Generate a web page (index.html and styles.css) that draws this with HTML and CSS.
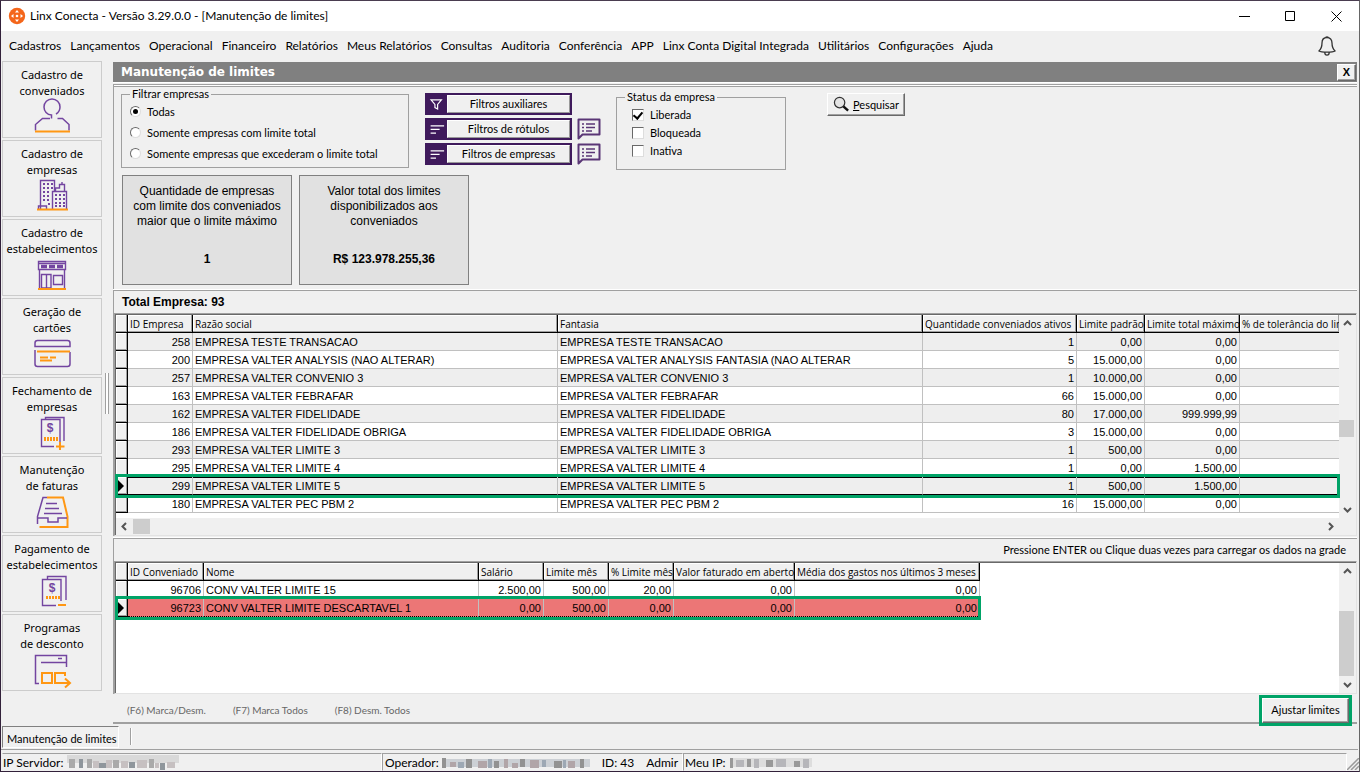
FILE: index.html
```html
<!DOCTYPE html>
<html lang="pt-BR">
<head>
<meta charset="utf-8">
<title>Linx Conecta - Manutenção de limites</title>
<link rel="stylesheet" href="styles.css">
</head>
<body>
<header class="titlebar">
  <svg class="app-logo" viewBox="0 0 18 18"><circle cx="9" cy="9" r="8.2" fill="#f4661b"/><g fill="#fff"><path d="M9 3l2 2.5H7zM9 15l2-2.5H7zM3 9l2.500-2v4zM15 9l-2.500-2v4z"/><circle cx="9" cy="9" r="1.300"/></g></svg>
  <h1 class="app-title">Linx Conecta - Versão 3.29.0.0 - [Manutenção de limites]</h1>
  <div class="window-controls">
    <button aria-label="Minimizar"><svg viewBox="0 0 11 11"><path d="M0 5.500h11"/></svg></button>
    <button aria-label="Maximizar"><svg viewBox="0 0 11 11"><path d="M.5.5h9v9h-9z"/></svg></button>
    <button aria-label="Fechar"><svg viewBox="0 0 11 11"><path d="M.5.5l10 10M10.500.5l-10 10"/></svg></button>
  </div>
</header>
<nav class="menubar">
  <a href="#">Cadastros</a><a href="#">Lançamentos</a><a href="#">Operacional</a><a href="#">Financeiro</a><a href="#">Relatórios</a><a href="#">Meus Relatórios</a><a href="#">Consultas</a><a href="#">Auditoria</a><a href="#">Conferência</a><a href="#">APP</a><a href="#">Linx Conta Digital Integrada</a><a href="#">Utilitários</a><a href="#">Configurações</a><a href="#">Ajuda</a>
  <button class="bell" aria-label="Notificações"><svg viewBox="0 0 18 20"><path d="M9 1.500c-3 0-5 2-5 5.500 0 4-.6 5.700-3 8 1.500 1 4 1.200 8 1.200s6.500-.2 8-1.200c-2.400-2.300-3-4-3-8 0-3.500-2-5.500-5-5.500zM7.500 1.700C7.500.5 10.500.5 10.500 1.700M6.800 16.500c0 3.500 4.400 3.500 4.400 0"/></svg></button>
</nav>
<div class="workspace">
  <aside class="sidebar">
    <button class="shortcut">Cadastro de<br>conveniados
      <svg viewBox="0 0 40 38"><g class="purple"><path d="M19.500 19.500v-3.500c-4.500 0-7.500-4-7.500-8a8 8 0 0 1 16 0c0 3-1.500 5.500-4 7"/><path d="M18 19.500h-7.500l-7 6v6M25.500 19.500h5l6.500 6v6"/></g><path class="orange" d="M3 32.500h35"/></svg></button>
    <button class="shortcut">Cadastro de<br>empresas
      <svg viewBox="0 0 40 38"><g class="purple thin"><path d="M8.500 31V2.500h14V14M20.500 31V13.500h14V31M23.500 13v-3h4V6.500h5V13M30 6V4M6.500 31v-3h8v3"/><path stroke-width="2" stroke-dasharray="2 2" d="M11 6h10M11 10h10M11 14h8M11 18h8M11 22h8M16 26h4M23 17h10M23 21h10M23 25h10M23 28h10"/></g><path class="orange" d="M5 31.500h31"/></svg></button>
    <button class="shortcut">Cadastro de<br>estabelecimentos
      <svg viewBox="0 0 40 38"><g class="purple thin"><path d="M6.500 4.500h27v8h-27zM6.500 6.500h27M7.500 12.500V31M32.500 12.500V31M9.500 17.500h9.500V31H9.500zM14.500 18v13M21.500 18.500h9v9h-9z"/><path stroke-width="3.500" stroke-dasharray="6 2" d="M9 9.500h22"/></g><path class="orange" d="M6 32h28"/></svg></button>
    <button class="shortcut">Geração de<br>cartões
      <svg viewBox="0 0 40 38"><g class="purple"><path d="M3 10.500h35V7c0-1.500-1-2.500-2.500-2.500h-30C4 4.500 3 5.500 3 7zM3 14v14c0 1.500 1 2.500 2.500 2.500h30c1.500 0 2.500-1 2.500-2.500V16"/></g><path class="orange" stroke-width="1" d="M5 15.500h33M8 21.500h8M18 21.500h6M8 24.500h12"/></svg></button>
    <button class="shortcut">Fechamento de<br>empresas
      <svg viewBox="0 0 40 38"><g class="purple thin"><path d="M22 31.500H9.500v-27h18.500V27M13.500 4V2.500h18.500V26"/></g><text class="coin" x="18" y="17">$</text><g class="orange"><path stroke-width="4" stroke-dasharray="2 1" d="M12 24h14"/><path d="M28 27v8M24 31.500h8.500"/></g></svg></button>
    <button class="shortcut">Manutenção<br>de faturas
      <svg viewBox="0 0 40 38"><path class="orange" d="M15 3.500h16l4.500 19V33h-28"/><g class="purple"><path d="M15 3.500H11l-5.500 19V30M5.500 24H16v4h10v-4h9M14 9.500h11M13 14.500h14M12 19.500h18"/></g></svg></button>
    <button class="shortcut">Pagamento de<br>estabelecimentos
      <svg viewBox="0 0 40 38"><g class="purple thin"><path d="M24 32.500H10.500v-26h18.500V28M15.500 6V3.500h18.500V27"/></g><text class="coin" x="20" y="19">$</text><g class="orange"><path stroke-width="3" stroke-dasharray="2 1" d="M14 24.500h14"/><path d="M26 32h8"/></g></svg></button>
    <button class="shortcut">Programas<br>de desconto
      <svg viewBox="0 0 40 38"><g class="purple"><path d="M7 31.500H3.500V3.500h31V15M9 10.500h25M26 6.500h4"/></g><path class="orange" d="M10 21h10v10H10zM33 24v-3H23v10h14M33 26.500l5 4.500-5 4.500"/></svg></button>
  </aside>
  <div class="splitter"></div>
  <main class="content">
    <div class="form-title"><h2>Manutenção de limites</h2><button class="raised close" aria-label="Fechar formulário">X</button></div>
    <section class="filters">
      <div class="filter-row">
        <fieldset class="group scope"><legend>Filtrar empresas</legend>
          <label><input type="radio" name="scope" checked>Todas</label>
          <label><input type="radio" name="scope">Somente empresas com limite total</label>
          <label><input type="radio" name="scope">Somente empresas que excederam o limite total</label>
        </fieldset>
        <div class="filter-buttons">
          <div class="filter-line"><button class="filter-btn"><svg viewBox="0 0 22 20"><path d="M5.500 5.500h11.500l-4.200 5v5l-3-1.500v-3.500z"/></svg><span>Filtros auxiliares</span></button></div>
          <div class="filter-line"><button class="filter-btn"><svg viewBox="0 0 22 20"><path d="M5 6.500h15M5 10.500h10M5 14.500h6"/></svg><span>Filtros de rótulos</span></button>
            <button class="note" aria-label="Rótulos selecionados"><svg viewBox="0 0 24 22"><path d="M1.500 20.500V1.500h21v15H5.500z"/><path class="dots" d="M5 6h2M9 6h9M5 9.500h2M9 9.500h9M5 13h2M9 13h6"/></svg></button></div>
          <div class="filter-line"><button class="filter-btn"><svg viewBox="0 0 22 20"><path d="M5 6.500h15M5 10.500h10M5 14.500h6"/></svg><span>Filtros de empresas</span></button>
            <button class="note" aria-label="Empresas selecionadas"><svg viewBox="0 0 24 22"><path d="M1.500 20.500V1.500h21v15H5.500z"/><path class="dots" d="M5 6h2M9 6h9M5 9.500h2M9 9.500h9M5 13h2M9 13h6"/></svg></button></div>
        </div>
        <fieldset class="group status"><legend>Status da empresa</legend>
          <label><input type="checkbox" checked>Liberada</label>
          <label><input type="checkbox">Bloqueada</label>
          <label><input type="checkbox">Inativa</label>
        </fieldset>
        <button class="raised search"><svg viewBox="0 0 18 18"><circle cx="7" cy="7" r="5.500" fill="#e4e4e4" stroke="#333" stroke-width="1.300"/><path d="M11 11l5 4.500" stroke="#111" stroke-width="2.600"/></svg><span><u>P</u>esquisar</span></button>
      </div>
      <div class="cards">
        <div class="card"><p>Quantidade de empresas com limite dos conveniados maior que o limite máximo</p><strong>1</strong></div>
        <div class="card"><p>Valor total dos limites disponibilizados aos conveniados</p><strong>R$ 123.978.255,36</strong></div>
      </div>
    </section>
    <section class="companies">
      <h3 class="total">Total Empresa: 93</h3>
      <div class="grid">
        <div class="grid-view">
          <table class="data wide striped">
            <colgroup><col class="c-mark"><col class="c-id"><col class="c-name"><col class="c-name"><col class="c-qty"><col class="c-std"><col class="c-max"><col></colgroup>
            <thead><tr><th></th><th>ID Empresa</th><th>Razão social</th><th>Fantasia</th><th>Quantidade conveniados ativos</th><th>Limite padrão</th><th>Limite total máximo</th><th>% de tolerância do limite</th></tr></thead>
            <tbody>
            <tr><th></th><td class="num">258</td><td>EMPRESA TESTE TRANSACAO</td><td>EMPRESA TESTE TRANSACAO</td><td class="num">1</td><td class="num">0,00</td><td class="num">0,00</td><td></td></tr>
            <tr><th></th><td class="num">200</td><td>EMPRESA VALTER ANALYSIS (NAO ALTERAR)</td><td>EMPRESA VALTER ANALYSIS FANTASIA (NAO ALTERAR</td><td class="num">5</td><td class="num">15.000,00</td><td class="num">0,00</td><td></td></tr>
            <tr><th></th><td class="num">257</td><td>EMPRESA VALTER CONVENIO 3</td><td>EMPRESA VALTER CONVENIO 3</td><td class="num">1</td><td class="num">10.000,00</td><td class="num">0,00</td><td></td></tr>
            <tr><th></th><td class="num">163</td><td>EMPRESA VALTER FEBRAFAR</td><td>EMPRESA VALTER FEBRAFAR</td><td class="num">66</td><td class="num">15.000,00</td><td class="num">0,00</td><td></td></tr>
            <tr><th></th><td class="num">162</td><td>EMPRESA VALTER FIDELIDADE</td><td>EMPRESA VALTER FIDELIDADE</td><td class="num">80</td><td class="num">17.000,00</td><td class="num">999.999,99</td><td></td></tr>
            <tr><th></th><td class="num">186</td><td>EMPRESA VALTER FIDELIDADE OBRIGA</td><td>EMPRESA VALTER FIDELIDADE OBRIGA</td><td class="num">3</td><td class="num">15.000,00</td><td class="num">0,00</td><td></td></tr>
            <tr><th></th><td class="num">293</td><td>EMPRESA VALTER LIMITE 3</td><td>EMPRESA VALTER LIMITE 3</td><td class="num">1</td><td class="num">500,00</td><td class="num">0,00</td><td></td></tr>
            <tr><th></th><td class="num">295</td><td>EMPRESA VALTER LIMITE 4</td><td>EMPRESA VALTER LIMITE 4</td><td class="num">1</td><td class="num">0,00</td><td class="num">1.500,00</td><td></td></tr>
            <tr class="current"><th><svg viewBox="0 0 6 12"><path d="M0 0l6 6-6 6z"/></svg><i class="frame"></i></th><td class="num">299</td><td>EMPRESA VALTER LIMITE 5</td><td>EMPRESA VALTER LIMITE 5</td><td class="num">1</td><td class="num">500,00</td><td class="num">1.500,00</td><td></td></tr>
            <tr><th></th><td class="num">180</td><td>EMPRESA VALTER PEC PBM 2</td><td>EMPRESA VALTER PEC PBM 2</td><td class="num">16</td><td class="num">15.000,00</td><td class="num">0,00</td><td></td></tr>
            </tbody>
          </table>
        </div>
        <div class="scroll-y"><svg viewBox="0 0 17 17"><path d="M5 10l3.500-3.500L12 10"/></svg><i class="thumb"></i><svg class="end" viewBox="0 0 17 17"><path d="M5 7l3.500 3.500L12 7"/></svg></div>
        <div class="scroll-x"><svg viewBox="0 0 17 17"><path d="M10 5L6.500 8.500 10 12"/></svg><i class="thumb"></i><svg class="end" viewBox="0 0 17 17"><path d="M7 5l3.500 3.500L7 12"/></svg></div>
      </div>
    </section>
    <section class="members">
      <p class="hint">Pressione ENTER ou Clique duas vezes para carregar os dados na grade</p>
      <div class="grid">
        <div class="grid-view">
          <table class="data">
            <colgroup><col class="c-mark"><col class="c-member"><col class="c-person"><col class="c-money"><col class="c-money"><col class="c-money"><col class="c-billed"><col class="c-average"></colgroup>
            <thead><tr><th></th><th>ID Conveniado</th><th>Nome</th><th>Salário</th><th>Limite mês</th><th>% Limite mês</th><th>Valor faturado em aberto</th><th>Média dos gastos nos últimos 3 meses</th></tr></thead>
            <tbody>
            <tr><th></th><td class="num">96706</td><td>CONV VALTER LIMITE 15</td><td class="num">2.500,00</td><td class="num">500,00</td><td class="num">20,00</td><td class="num">0,00</td><td class="num">0,00</td></tr>
            <tr class="current exceeded"><th><svg viewBox="0 0 6 12"><path d="M0 0l6 6-6 6z"/></svg><i class="frame"></i></th><td class="num">96723</td><td>CONV VALTER LIMITE DESCARTAVEL 1</td><td class="num">0,00</td><td class="num">500,00</td><td class="num">0,00</td><td class="num">0,00</td><td class="num">0,00</td></tr>
            </tbody>
          </table>
        </div>
        <div class="scroll-y bottom"><svg viewBox="0 0 17 17"><path d="M5 10l3.500-3.500L12 10"/></svg><i class="thumb"></i><svg viewBox="0 0 17 17"><path d="M5 7l3.500 3.500L12 7"/></svg></div>
      </div>
    </section>
    <footer class="actions"><span>(F6) Marca/Desm.</span><span>(F7) Marca Todos</span><span>(F8) Desm. Todos</span><button class="raised adjust">Ajustar limites</button></footer>
  </main>
</div>
<div class="taskbar"><button class="task">Manutenção de limites</button><i class="task-sep"></i></div>
<footer class="statusbar">
  <div class="cell server">IP Servidor:
    <svg class="mosaic" viewBox="0 0 112 15" width="112"><path fill="#d9d9d9" d="M0 0h112v8H0z"/><path fill="#aaa" d="M2 4h6v9H2zM20 4h5v9h-5zM46 5h6v8h-6zM82 4h5v9h-5z"/><path fill="#8f969c" d="M12 4h4v9h-4zM32 8h7v5h-7zM62 7h6v6h-6zM93 8h5v7h-5z"/><path fill="#c6c0c1" d="M26 6h6v7h-6zM39 5h6v8h-6zM54 6h7v7h-7zM70 5h10v8H70zM88 8h4v5h-4zM100 7h8v6h-8z"/></svg></div>
  <div class="cell operator"><span>Operador:
    <svg class="mosaic" viewBox="0 0 148 15" width="148"><path fill="#ccd0d5" d="M0 4h148v8H0z"/><path fill="#929292" d="M0 3h4v10H0zM24 4h6v9h-6zM52 6h5v7h-5zM78 4h5v8h-5zM112 6h8v7h-8zM138 4h4v9h-4z"/><path fill="#b1a5a8" d="M8 7h6v5H8zM36 6h9v7h-9zM62 4h4v9h-4zM70 8h6v5h-6zM88 5h9v8h-9zM126 6h7v7h-7z"/><path fill="#9da8b4" d="M16 7h6v6h-6zM46 4h4v9h-4zM100 5h4v7h-4zM121 5h3v8h-3z"/></svg></span><span>ID: 43</span><span>Admir</span></div>
  <div class="cell address">Meu IP:
    <svg class="mosaic" viewBox="0 0 82 15" width="82"><path fill="#ddd" d="M0 3h82v9H0z"/><path fill="#999" d="M0 3h3v10H0zM17 4h4v8h-4zM36 5h7v7h-7zM64 6h6v6h-6z"/><path fill="#b6b6ba" d="M6 5h8v7H6zM24 4h5v9h-5zM46 4h10v8H46zM73 4h6v9h-6z"/></svg></div>
  <svg class="grip" viewBox="0 0 12 12"><path d="M0 12L12 0M4 12l8-8M8 12l4-4"/></svg>
</footer>
</body>
</html>
```

FILE: styles.css
```css
* { box-sizing: border-box; }

body {
  display: flex;
  flex-direction: column;
  min-height: 100vh;
  margin: 0;
  border: 1px solid #32213a;
  border-top-color: #4a3d50;
  border-right-color: #666;
  background: #f0f0f0;
  color: #000;
  font: 11px/14px Lato, "Liberation Sans", sans-serif;
}

h1, h2, h3, p { margin: 0; font-size: inherit; }
button { margin: 0; padding: 0; border: 0; background: none; color: inherit; font: inherit; }
svg { display: block; fill: none; flex: none; }

.titlebar { display: flex; align-items: center; height: 30px; padding-left: 7px; background: #fff; }
.app-logo { width: 18px; height: 18px; }
.app-title { flex: 1; margin-left: 4px; font: 12px/16px Lato, sans-serif; }
.window-controls { display: flex; }
.window-controls button { display: grid; place-items: center; width: 46px; height: 30px; }
.window-controls svg { width: 11px; height: 11px; stroke: #000; }

.menubar { display: flex; align-items: center; gap: 9px; height: 30px; padding: 0 23px 0 8px; font: 12px/16px Lato, sans-serif; white-space: nowrap; }
.menubar a { color: inherit; text-decoration: none; }
.bell { margin-left: auto; }
.bell svg { width: 18px; height: 20px; stroke: #333; stroke-width: 1.3; }

.workspace { display: flex; flex: 1; }
.sidebar { display: flex; flex-direction: column; gap: 2px; width: 101px; padding-left: 1px; }
.shortcut { height: 77px; padding-top: 5px; border: 1px solid #ccc; font: 11px/16px "Noto Sans", sans-serif; text-align: center; }
.shortcut svg { width: 40px; height: 38px; margin: 0 auto; overflow: visible; }
.purple { stroke: #7345a0; stroke-width: 1.5; }
.thin { stroke-width: 1.4; }
.orange { stroke: #ff9713; stroke-width: 2; }
.coin { fill: #7345a0; font: bold 12px "Liberation Sans", sans-serif; text-anchor: middle; }
.splitter { width: 4px; height: 41px; margin: 312px 4px 0 3px; border: 1px solid #a0a0a0; border-width: 0 1px; background: #fff; }

.content { display: flex; flex: 1; flex-direction: column; min-width: 0; margin-right: 2px; }
.form-title { display: flex; align-items: center; justify-content: space-between; height: 21px; margin-top: 1px; padding: 0 1px 0 8px; border-bottom: 1px solid #fff; background: #808080; color: #fff; }
.form-title h2 { font: bold 12px/18px "DejaVu Sans", sans-serif; }
.raised { border: 1px solid; border-color: #fff #696969 #696969 #fff; background: #f0f0f0; box-shadow: inset -1px -1px #a0a0a0; }
.close { width: 19px; height: 17px; color: #000; font: bold 11px/14px "Liberation Sans", sans-serif; }

.filters { height: 206px; margin-top: 1px; padding: 2px 7px; border-left: 1px solid #a0a0a0; border-top: 1px solid #a0a0a0; box-shadow: inset 0 1px #fff, inset 0 2px #a0a0a0; }
.filter-row { display: flex; align-items: flex-start; }
.group { margin: 0; padding: 0 8px; border: 1px solid #a0a0a0; }
.group legend { padding: 0 2px; line-height: 14px; }
.group label { display: flex; align-items: center; }
.group input { display: grid; place-items: center; width: 12px; height: 12px; margin: 0 6px 0 0; appearance: none; border: 1px solid; border-color: #696969 #ddd #ddd #696969; background: #fff; }
.group input[type="radio"] { width: 11px; height: 11px; border-radius: 50%; }
.group input[type="radio"]:checked::after { width: 5px; height: 5px; border-radius: 50%; background: #000; content: ""; }
.group input[type="checkbox"]:checked::after { width: 4px; height: 7px; margin-bottom: 2px; border: solid #000; border-width: 0 2px 2px 0; transform: rotate(40deg); content: ""; }
.scope { width: 288px; height: 81px; }
.scope label { height: 21px; }
.status { width: 170px; height: 80px; margin: 3px 0 0 15px; padding: 0 15px; }
.status label { height: 18px; }
.status legend { margin: 0 0 2px -7px; }

.filter-buttons { display: flex; flex-direction: column; gap: 3px; margin: 6px 0 0 16px; }
.filter-line { display: flex; gap: 5px; }
.filter-btn { display: flex; width: 147px; height: 22px; padding: 2px 2px 2px 0; background: #3f1a5c; }
.filter-btn svg { width: 22px; height: 18px; stroke: #fff; stroke-width: 1.3; }
.filter-btn span { flex: 1; border: 1px solid; border-color: #fff #999 #999 #fff; background: #f0f0f0; line-height: 16px; }
.note svg { width: 24px; height: 22px; stroke: #5a3676; stroke-width: 2; stroke-linejoin: round; }
.note .dots { stroke-width: 1.6; }
.search { display: flex; align-items: center; gap: 3px; width: 78px; height: 23px; margin: 6px 0 0 41px; padding-left: 5px; }
.search svg { width: 17px; height: 17px; }

.cards { display: flex; gap: 7px; padding: 5px 0 0 1px; }
.card { display: flex; flex-direction: column; width: 170px; height: 110px; padding: 8px 6px 17px; border: 1px solid #808080; background: #e1e1e1; font: 12px/15px "Liberation Sans", sans-serif; text-align: center; }
.card strong { margin-top: auto; }

.companies, .members { border-left: 1px solid #a0a0a0; border-top: 1px solid #a0a0a0; box-shadow: 0 -1px #fff; }
.total { height: 22px; padding-left: 8px; font: bold 12px/22px "Liberation Sans", sans-serif; }
.members { display: flex; flex: 1; flex-direction: column; margin-top: 2px; }
.members .grid { flex: 1; }
.hint { height: 22px; padding-right: 11px; line-height: 22px; text-align: right; }

.grid { display: grid; grid-template-columns: 1fr 17px; padding: 1px 0 0 1px; border: 1px solid #a0a0a0; border-right-color: #e3e3e3; border-bottom-color: #e3e3e3; background: #fff; box-shadow: inset 1px 1px #696969; }
.grid-view { min-width: 0; }
.companies .grid-view { padding-bottom: 5px; }
.data { border-spacing: 0; table-layout: fixed; width: 864px; }
.data.wide { width: 100%; }
.data th, .data td { overflow: hidden; height: 18px; padding: 1px 2px 0; border: 0 solid #c0c0c0; border-width: 0 1px 1px 0; line-height: 16px; white-space: nowrap; text-align: left; font-weight: normal; }
.data td { font-family: "Liberation Sans", Arial, sans-serif; }
.data .num { text-align: right; }
.data th { padding-right: 0; border-color: #000; background: #f0f0f0; box-shadow: inset -1px -1px #a0a0a0, inset 1px 1px #fff; font-family: "Open Sans", sans-serif; font-size: 10px; }
.data.wide th:last-child:not(:first-child), .data.wide td:last-child { border-right-width: 0; }
.striped tbody tr:nth-child(odd) td { background: #eee; }
.data th svg { width: 6px; height: 12px; fill: #000; }
.data tr.current { position: relative; }
.data .current th { overflow: visible; }
.frame { position: absolute; z-index: 1; inset: -3px -1px -3px -1px; border: 3px solid #00a367; }
.data .current td { border-bottom-color: #000; box-shadow: inset 0 1px #000; }
.data .exceeded td { border-bottom: 1px dotted #000; background: #ec7676; box-shadow: none; }
.c-mark { width: 12px; }
.c-id { width: 65px; }
.c-name { width: 365px; }
.c-qty { width: 154px; }
.c-std { width: 68px; }
.c-max { width: 95px; }
.c-member { width: 76px; }
.c-person { width: 275px; }
.c-money { width: 65px; }
.c-billed { width: 121px; }
.c-average { width: 185px; }

.scroll-y, .scroll-x { display: flex; background: #f0f0f0; }
.scroll-y { flex-direction: column; }
.scroll-x { grid-column: 1 / -1; padding-right: 17px; }
.scroll-y svg, .scroll-x svg { width: 17px; height: 17px; stroke: #555; stroke-width: 2; }
.thumb { width: 17px; height: 17px; background: #cdcdcd; }
.scroll-y .thumb { width: 15px; margin-top: 88px; }
.scroll-x .thumb { height: 15px; margin-top: 1px; }
.scroll-y .end { margin-top: auto; }
.scroll-x .end { margin-left: auto; }
.scroll-y.bottom .thumb { height: 65px; margin-top: auto; }

.actions { display: flex; align-items: center; gap: 27px; height: 28px; margin-top: 2px; padding: 2px 8px 0 14px; border-bottom: 2px solid #a0a0a0; color: #666; font-size: 10px; }
.adjust { position: relative; width: 87px; height: 25px; margin-left: auto; box-shadow: inset -1px -1px #a0a0a0, 0 0 0 3px #00a367; color: #000; font-size: 11px; }

.taskbar { display: flex; align-items: center; height: 26px; margin-right: 1px; padding-left: 1px; border-bottom: 1px solid #a0a0a0; }
.task { height: 22px; padding: 4px 1px 0 4px; border: 1px solid; border-color: #808080 #fff #fff #808080; }
.task-sep { width: 2px; height: 17px; margin-left: 11px; border-left: 1px solid #a0a0a0; background: #fff; }
.statusbar { display: flex; height: 18px; margin-top: 3px; padding-left: 1px; font: 12px/16px Lato, sans-serif; white-space: nowrap; }
.cell { display: flex; gap: 4px; padding-top: 1px; border: 1px solid; border-color: #a0a0a0 #fff #f0f0f0 #f0f0f0; }
.server { width: 380px; }
.operator { gap: 12px; width: 301px; padding-left: 2px; border-left-color: #a0a0a0; }
.operator span:first-child { display: flex; gap: 3px; }
.address { flex: 1; padding-left: 1px; border-left-color: #a0a0a0; }
.mosaic { height: 15px; }
.grip { width: 12px; height: 12px; margin-top: 5px; stroke: #999; stroke-width: 1.5; }
```
